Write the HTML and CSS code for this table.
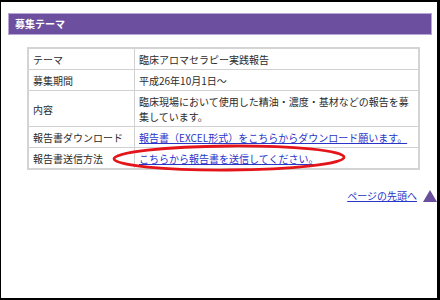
FILE: index.html
```html
<!DOCTYPE html>
<html lang="ja">
<head>
<meta charset="utf-8">
<title>募集テーマ</title>
<link rel="stylesheet" href="styles.css">
</head>
<body>
<div class="frame">
  <h2 class="section-title">募集テーマ</h2>
  <div class="table-wrap">
    <table class="info">
      <tr><th>テーマ</th><td>臨床アロマセラピー実践報告</td></tr>
      <tr><th>募集期間</th><td>平成26年10月1日～</td></tr>
      <tr><th>内容</th><td>臨床現場において使用した精油・濃度・基材などの報告を募集しています。</td></tr>
      <tr><th>報告書ダウンロード</th><td><a href="#">報告書（EXCEL形式）をこちらからダウンロード願います。</a></td></tr>
      <tr><th>報告書送信方法</th><td><a href="#">こちらから報告書を送信してください。</a></td></tr>
    </table>
    <!-- hand-drawn red circle marking the send link -->
    <svg class="marker" width="250" height="34" viewBox="0 0 250 34">
      <ellipse cx="118" cy="15" rx="115" ry="12" fill="none" stroke="#e3151a" stroke-width="2.8" transform="rotate(-0.4 118 15)"/>
    </svg>
  </div>
  <div class="pagetop">
    <a href="#">ページの先頭へ</a>
    <svg class="pagetop-arrow" width="14" height="12" viewBox="0 0 14 12"><polygon points="7,0 14,12 0,12" fill="#6a4f9c"/></svg>
  </div>
</div>
</body>
</html>
```
FILE: styles.css
```css
html, body {
  margin: 0;
  padding: 0;
  background: #fff;
}

body {
  font-family: "Noto Sans CJK JP", "Noto Sans", sans-serif;
  font-size: 10px;
  color: #2b2b2b;
}

.frame {
  box-sizing: border-box;
  width: 440px;
  height: 300px;
  border-style: solid;
  border-color: #000;
  border-width: 2px 3px 2px 1px;
  padding: 11px 5px 0 7px;
  overflow: hidden;
}

.section-title {
  margin: 0;
  height: 20px;
  line-height: 20px;
  padding-left: 6px;
  background: #6c4f9e;
  border: 1px solid #b7a6d6;
  color: #fff;
  font-size: 10px;
  font-weight: bold;
}

.table-wrap {
  position: relative;
  margin: 12px 12px 0 19px;
}

.info {
  width: 100%;
  border-collapse: collapse;
  border: 2px solid #d4d4d4;
}

.info th,
.info td {
  border: 1px solid #d0d0d0;
  padding: 3px 4px 2px 4px;
  line-height: 15px;
  text-align: left;
  font-weight: normal;
  vertical-align: middle;
}

.info th {
  width: 97px;
}

.info a {
  color: #2a35c8;
  text-decoration: underline;
}

.marker {
  position: absolute;
  left: 84px;
  top: 96px;
  pointer-events: none;
}

.pagetop {
  display: flex;
  justify-content: flex-end;
  align-items: flex-end;
  gap: 6px;
  margin-top: 19px;
  margin-right: -5px;
}

.pagetop a {
  color: #2a35c8;
  text-decoration: underline;
  line-height: 14px;
}

.pagetop-arrow {
  display: block;
  margin-bottom: 1px;
}
```
